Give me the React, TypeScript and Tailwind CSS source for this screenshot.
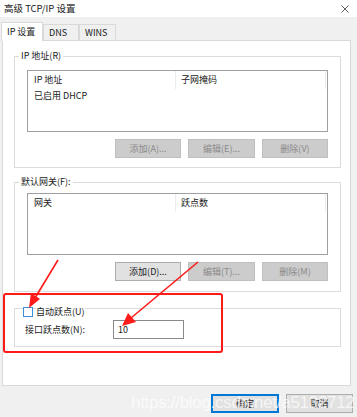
import type { FC, ReactNode } from 'react';

const FONT = "font-['Noto_Sans_CJK_SC','Noto_Sans',sans-serif]";

const Tab: FC<{ children: ReactNode; active?: boolean; w: string }> = ({
  children,
  active,
  w,
}) => (
  <div
    className={`${w} flex items-center pl-[5px] border border-[#d9d9d9] ${
      active
        ? 'h-[19px] bg-white border-b-0 relative z-10 -mb-px'
        : 'h-[16px] bg-[#f0f0f0] border-b-0'
    }`}
  >
    {children}
  </div>
);

const Btn: FC<{ children: ReactNode; enabled?: boolean; w?: string }> = ({
  children,
  enabled,
  w = 'w-[66px]',
}) => (
  <div
    className={`${w} h-[19px] flex items-center justify-center border ${
      enabled
        ? 'bg-[#e1e1e1] border-[#adadad] text-[#1a1a1a]'
        : 'bg-[#cccccc] border-[#bfbfbf] text-[#8a8a8a]'
    }`}
  >
    {children}
  </div>
);

const ListView: FC<{ col1: string; col2: string; row?: string }> = ({
  col1,
  col2,
  row,
}) => (
  <div className="ml-[12px] w-[301px] h-[62px] border border-[#a0a0a0] bg-white">
    <div className="flex h-[18px] items-center">
      <div className="w-[148px] h-full flex items-center pl-[6px] border-r border-[#ececec]">
        {col1}
      </div>
      <div className="w-[150px] h-full flex items-center pl-[5px] border-r border-[#ececec]">
        {col2}
      </div>
    </div>
    {row && <div className="pl-[6px] h-[14px] flex items-center">{row}</div>}
  </div>
);

const Group: FC<{ label?: string; h: string; children: ReactNode }> = ({
  label,
  h,
  children,
}) => (
  <div className={`relative ml-[11px] w-[327px] ${h} border border-[#dcdcdc]`}>
    {label && (
      <div className="absolute -top-[7px] left-[4px] bg-white px-[2px] leading-[12px]">
        {label}
      </div>
    )}
    {children}
  </div>
);

export default function App() {
  return (
    <div
      className={`relative w-[357px] h-[417px] overflow-hidden bg-[#f0f0f0] text-[9px] text-[#1a1a1a] ${FONT}`}
    >
      {/* title bar */}
      <div className="h-[17px] bg-white flex items-center justify-between pl-[4px] pr-[8px]">
        <span className="text-[9.5px]">高级 TCP/IP 设置</span>
        <svg width="8" height="8" viewBox="0 0 8 8">
          <path d="M0.5 0.5 L7.5 7.5 M7.5 0.5 L0.5 7.5" stroke="#333" strokeWidth="0.8" />
        </svg>
      </div>

      {/* tabs */}
      <div className="flex items-end pl-[1px] mt-[5px] h-[18px]">
        <Tab active w="w-[42px]">IP 设置</Tab>
        <Tab w="w-[36px]">DNS</Tab>
        <Tab w="w-[37px]">WINS</Tab>
      </div>

      {/* panel */}
      <div className="ml-[2px] w-[349px] h-[346px] bg-white border border-[#d9d9d9] pt-[15px]">
        <Group label="IP 地址(R)" h="h-[112px]">
          <div className="pt-[13px]">
            <ListView col1="IP 地址" col2="子网掩码" row="已启用 DHCP" />
            <div className="flex justify-end gap-[7px] pr-[12px] mt-[7px]">
              <Btn>添加(A)...</Btn>
              <Btn w="w-[67px]">编辑(E)...</Btn>
              <Btn>删除(V)</Btn>
            </div>
          </div>
        </Group>

        <div className="mt-[14px]">
          <Group label="默认网关(F):" h="h-[110px]">
            <div className="pt-[10px]">
              <ListView col1="网关" col2="跃点数" />
              <div className="flex justify-end gap-[7px] pr-[12px] mt-[7px]">
                <Btn enabled>添加(D)...</Btn>
                <Btn w="w-[67px]">编辑(T)...</Btn>
                <Btn>删除(M)</Btn>
              </div>
            </div>
          </Group>
        </div>

        <div className="mt-[16px]">
          <Group h="h-[39px]">
            <div className="flex items-center h-[12px] mt-[-3px] pl-[8px]">
              <div className="w-[10px] h-[10px] border border-[#3c8fd8] bg-white" />
              <span className="ml-[3px] bg-white">自动跃点(U)</span>
            </div>
            <div className="flex items-center mt-[2px] pl-[10px]">
              <span className="w-[88px]">接口跃点数(N):</span>
              <div className="w-[71px] h-[19px] border border-[#8a8a8a] flex items-center pl-[4px]">
                10
              </div>
            </div>
          </Group>
        </div>
      </div>

      {/* dialog buttons */}
      <div className="flex justify-end gap-[7px] pr-[4px] mt-[8px]">
        <div className="w-[68px] h-[19px] flex items-center justify-center border-2 border-[#0078d7] bg-[#e1e1e1]">
          确定
        </div>
        <div className="w-[67px] h-[19px] flex items-center justify-center border border-[#adadad] bg-[#e1e1e1]">
          取消
        </div>
      </div>

      {/* watermark */}
      <div className="absolute left-[131px] top-[393px] text-[17px] leading-[20px] text-white/70 font-['Liberation_Sans',sans-serif] tracking-[-0.3px]">
        https://blog.csdn.net/a5132712
      </div>

      {/* annotation: red box */}
      <div className="absolute left-[3px] top-[293px] w-[220px] h-[60px] border-2 border-[#ff1a1a] rounded-[3px]" />

      {/* annotation: arrows */}
      <svg className="absolute left-0 top-0" width="357" height="417" viewBox="0 0 357 417">
        <line x1="58" y1="260" x2="35" y2="298" stroke="#ff1a1a" strokeWidth="1.6" />
        <polygon points="29,308 31,293 40,299" fill="#ff1a1a" />
        <line x1="198" y1="262" x2="131" y2="318" stroke="#ff1a1a" strokeWidth="1.6" />
        <polygon points="122,326 128,313 136,322" fill="#ff1a1a" />
      </svg>
    </div>
  );
}
